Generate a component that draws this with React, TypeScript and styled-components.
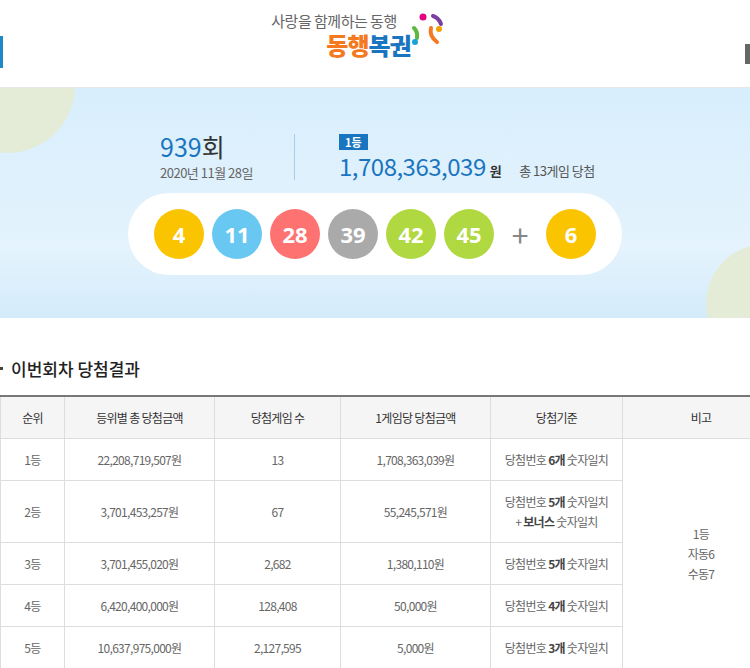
import React from "react";
import styled, { createGlobalStyle } from "styled-components";

const G = createGlobalStyle`
  body { margin:0; font-family: "Noto Sans CJK KR", "Noto Sans", sans-serif; background:#fff; }
`;
const Page = styled.div`width:750px;height:668px;overflow:hidden;position:relative;`;
const Header = styled.header`height:88px;position:relative;display:flex;justify-content:center;border-bottom:1px solid #e6e6e6;box-sizing:border-box;`;
const LeftMark = styled.div`position:absolute;left:0;top:36px;width:3px;height:32px;background:#1e88c8;`;
const RightMark = styled.div`position:absolute;right:0;top:44px;width:5px;height:20px;background:#666;`;
const Logo = styled.div`display:flex;flex-direction:column;align-items:flex-end;padding:10px 0 0 0;position:relative;margin-right:50px;`;
const Slogan = styled.div`font-size:15px;color:#666;letter-spacing:-0.5px;margin-right:32px;`;
const Brand = styled.div`font-size:24px;font-weight:900;letter-spacing:-1px;margin-right:18px;line-height:28px;`;
const Banner = styled.section`height:230px;background:linear-gradient(#d8eefc,#e4f3fd 70%,#d3ebfa);position:relative;overflow:hidden;display:flex;flex-direction:column;align-items:center;`;
const Circle = styled.div<{l:number;t:number;s:number}>`position:absolute;left:${p=>p.l}px;top:${p=>p.t}px;width:${p=>p.s}px;height:${p=>p.s}px;border-radius:50%;background:#e4ecd8;`;
const InfoRow = styled.div`display:flex;align-items:center;margin-top:40px;margin-left:40px;width:470px;`;
const Draw = styled.div`width:134px;`;
const DrawNo = styled.div`font-size:25px;color:#1a75c0;line-height:28px;span{color:#333;}`;
const DateTxt = styled.div`font-size:13px;color:#666;letter-spacing:-0.5px;margin-top:3px;`;
const Divider = styled.div`width:1px;height:46px;background:#a9cde6;margin-right:44px;`;
const Badge = styled.span`display:inline-block;background:#1a75c0;color:#fff;font-size:11px;font-weight:700;padding:0 6px;line-height:16px;`;
const Amount = styled.div`font-size:24px;color:#1a75c0;display:flex;align-items:baseline;gap:4px;line-height:28px;letter-spacing:-0.5px;`;
const Won = styled.span`font-size:13px;color:#333;font-weight:700;`;
const Total = styled.span`font-size:13px;color:#555;margin-left:14px;`;
const Pill = styled.div`margin-top:8px;width:494px;height:82px;background:#fff;border-radius:41px;display:flex;align-items:center;justify-content:center;gap:8px;`;
const Ball = styled.div<{c:string}>`width:50px;height:50px;border-radius:50%;background:${p=>p.c};color:#fff;font-size:22px;font-weight:700;display:flex;align-items:center;justify-content:center;font-family:"Noto Sans",sans-serif;`;
const Plus = styled.div`font-size:30px;color:#888;width:36px;text-align:center;`;
const Title = styled.h2`margin:38px 0 14px 0;font-size:17px;font-weight:500;color:#222;display:flex;align-items:center;gap:8px;&:before{content:"";width:3px;height:3px;background:#444;}`;
const Table = styled.table`border-collapse:collapse;width:780px;border-top:2px solid #777;font-size:12px;color:#666;letter-spacing:-0.7px;`;
const Th = styled.th`background:#f5f5f5;font-weight:400;color:#333;height:41px;padding:0;border:1px solid #ddd;border-top:none;`;
const Td = styled.td<{h?:number}>`border:1px solid #ddd;text-align:center;padding:0;height:${p=>p.h||41}px;line-height:20px;b{color:#444;}`;

const balls:[number,string][]=[[4,"#fbc400"],[11,"#69c8f2"],[28,"#ff7272"],[39,"#aaa"],[42,"#b0d840"],[45,"#b0d840"]];
const rows=[
  ["1등","22,208,719,507원","13","1,708,363,039원",<>당첨번호 <b>6개</b> 숫자일치</>,41],
  ["2등","3,701,453,257원","67","55,245,571원",<>당첨번호 <b>5개</b> 숫자일치<br/>+ <b>보너스</b> 숫자일치</>,61],
  ["3등","3,701,455,020원","2,682","1,380,110원",<>당첨번호 <b>5개</b> 숫자일치</>,41],
  ["4등","6,420,400,000원","128,408","50,000원",<>당첨번호 <b>4개</b> 숫자일치</>,41],
  ["5등","10,637,975,000원","2,127,595","5,000원",<>당첨번호 <b>3개</b> 숫자일치</>,42],
] as const;

export default function App(){
  return <Page><G/>
    <Header><LeftMark/><RightMark/>
      <Logo>
        <Slogan>사랑을 함께하는 동행</Slogan>
        <Brand><span style={{color:"#f47920"}}>동행</span><span style={{color:"#1a75c0"}}>복권</span></Brand>
        <svg width="36" height="40" viewBox="0 0 36 40" style={{position:"absolute",right:-16,top:12}}>
          <circle cx="14" cy="5" r="3.5" fill="#e4007f"/>
          <path d="M24 4 q6 2 8 8" stroke="#7b3fa0" strokeWidth="4" fill="none" strokeLinecap="round"/>
          <circle cx="30" cy="17" r="3" fill="#f5a000"/>
          <path d="M5 16 q4 4 3 10" stroke="#5db844" strokeWidth="4" fill="none" strokeLinecap="round"/>
          <path d="M22 16 q-2 8 6 14" stroke="#f47920" strokeWidth="4" fill="none" strokeLinecap="round"/>
          <circle cx="6" cy="30" r="3" fill="#1aa0d8"/>
        </svg>
      </Logo>
    </Header>
    <Banner>
      <Circle l={-60} t={-70} s={135}/>
      <Circle l={706} t={156} s={120}/>
      <InfoRow>
        <Draw><DrawNo>939<span>회</span></DrawNo><DateTxt>2020년 11월 28일</DateTxt></Draw>
        <Divider/>
        <div><Badge>1등</Badge>
          <Amount>1,708,363,039<Won>원</Won><Total>총 13게임 당첨</Total></Amount></div>
      </InfoRow>
      <Pill>{balls.map(([n,c])=><Ball key={n} c={c}>{n}</Ball>)}<Plus>+</Plus><Ball c="#fbc400">6</Ball></Pill>
    </Banner>
    <Title>이번회차 당첨결과</Title>
    <Table>
      <colgroup><col width="64"/><col width="150"/><col width="126"/><col width="150"/><col width="132"/><col/></colgroup>
      <thead><tr><Th>순위</Th><Th>등위별 총 당첨금액</Th><Th>당첨게임 수</Th><Th>1게임당 당첨금액</Th><Th>당첨기준</Th><Th>비고</Th></tr></thead>
      <tbody>{rows.map((r,i)=><tr key={i}>
        <Td h={r[5]}>{r[0]}</Td><Td>{r[1]}</Td><Td>{r[2]}</Td><Td>{r[3]}</Td><Td>{r[4]}</Td>
        {i===0&&<Td rowSpan={5}>1등<br/>자동6<br/>수동7</Td>}
      </tr>)}</tbody>
    </Table>
  </Page>;
}
